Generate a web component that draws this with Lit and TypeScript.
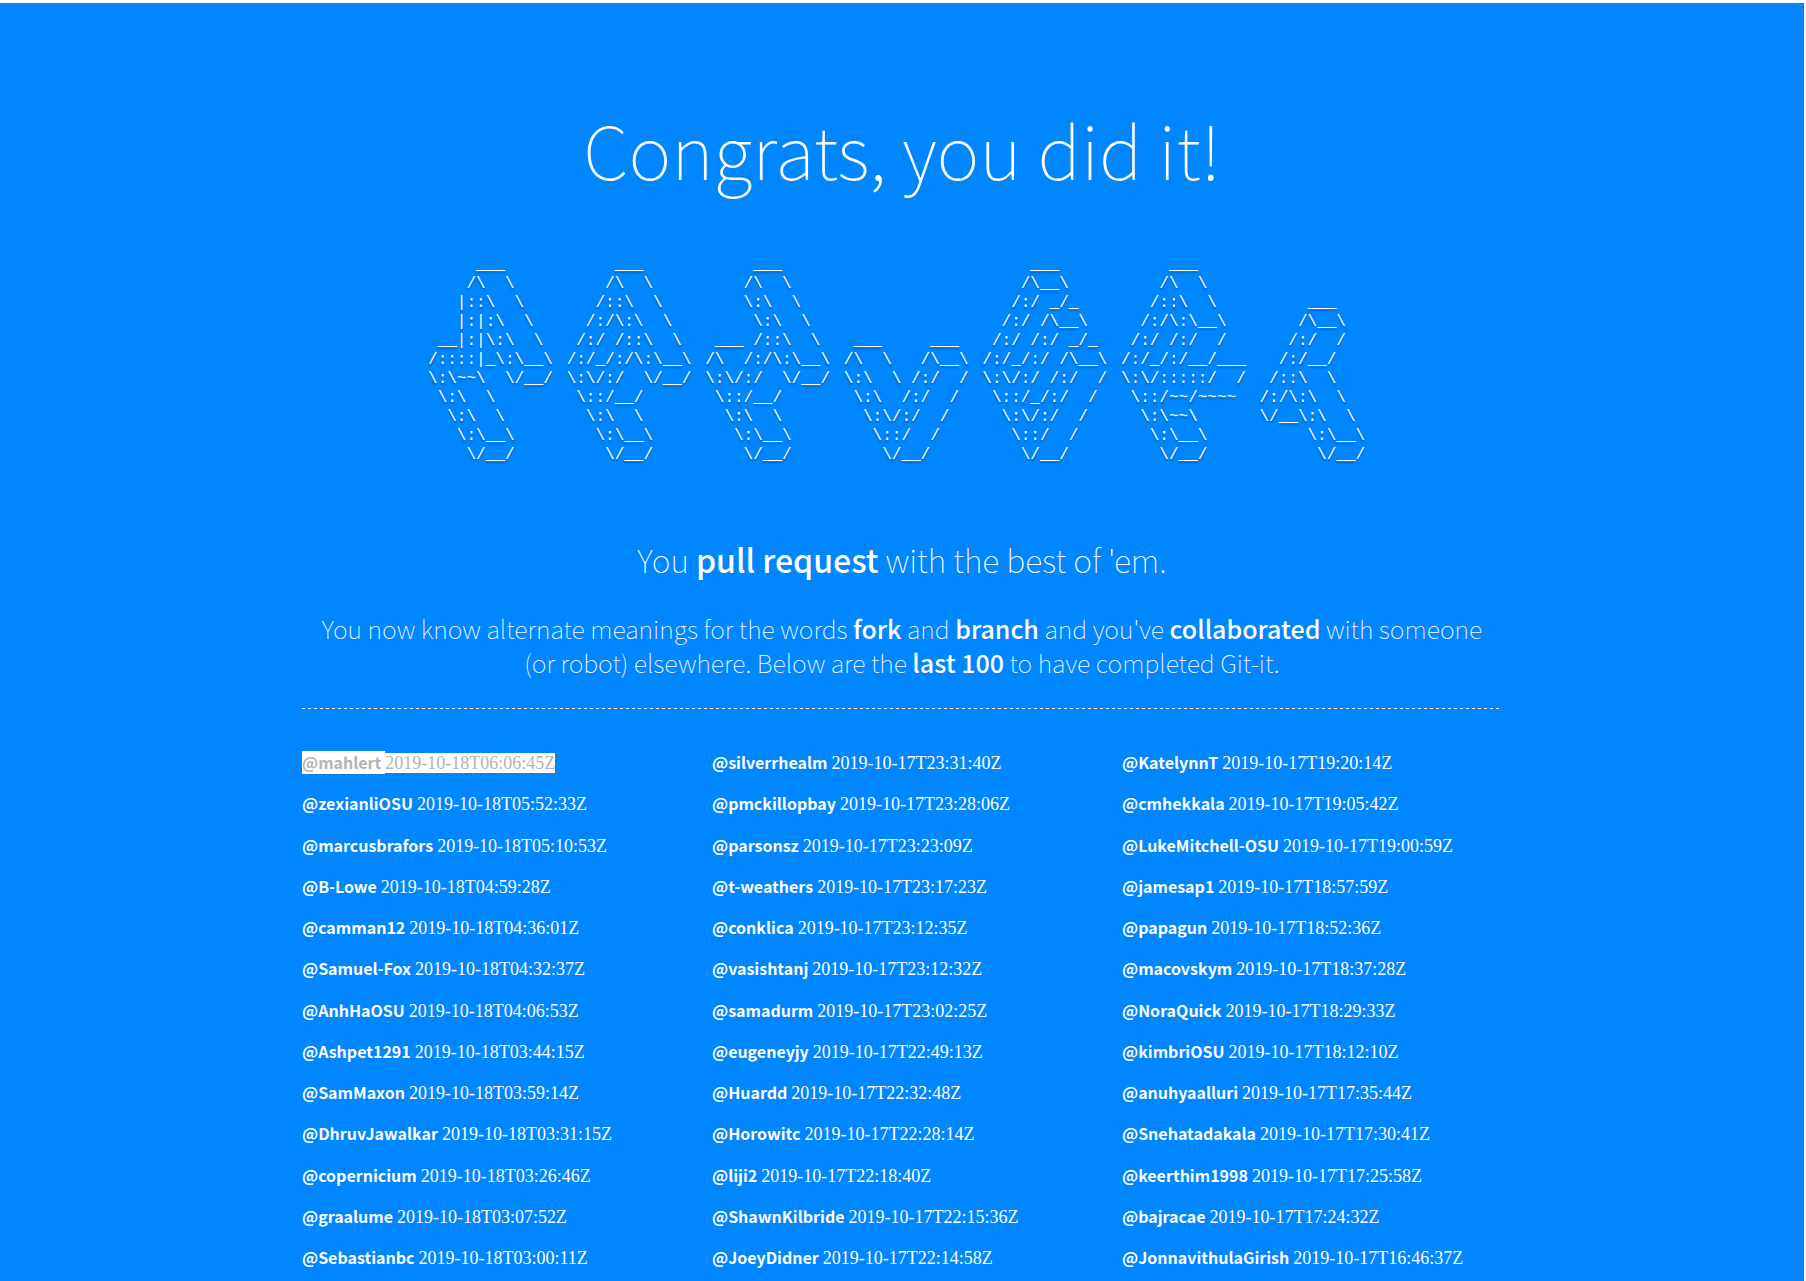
import { LitElement, html, css } from "lit";
import { customElement, property } from "lit/decorators.js";

interface Finisher {
  name: string;
  time: string;
  selected?: boolean;
}

/* One entry per banner character, eleven rows each. */
const GLYPHS: string[] = [
  String.raw`
     ___
    /\  \
   |::\  \
   |:|:\  \
 __|:|\:\  \
/::::|_\:\__\
\:\~~\  \/__/
 \:\  \
  \:\  \
   \:\__\
    \/__/     `,
  String.raw`
     ___
    /\  \
   /::\  \
  /:/\:\  \
 /:/ /::\  \
/:/_/:/\:\__\
\:\/:/  \/__/
 \::/__/
  \:\  \
   \:\__\
    \/__/     `,
  String.raw`
     ___
    /\  \
    \:\  \
     \:\  \
 ___ /::\  \
/\  /:/\:\__\
\:\/:/  \/__/
 \::/__/
  \:\  \
   \:\__\
    \/__/     `,
  String.raw`




 ___     ___
/\  \   /\__\
\:\  \ /:/  /
 \:\  /:/  /
  \:\/:/  /
   \::/  /
    \/__/     `,
  String.raw`
     ___
    /\__\
   /:/ _/_
  /:/ /\__\
 /:/ /:/ _/_
/:/_/:/ /\__\
\:\/:/ /:/  /
 \::/_/:/  /
  \:\/:/  /
   \::/  /
    \/__/     `,
  String.raw`
     ___
    /\  \
   /::\  \
  /:/\:\__\
 /:/ /:/  /
/:/_/:/__/___
\:\/:::::/  /
 \::/~~/~~~~
  \:\~~\
   \:\__\
    \/__/     `,
  String.raw`


     ___
    /\__\
   /:/  /
  /:/__/
 /::\  \
/:/\:\  \
\/__\:\  \
     \:\__\
      \/__/   `,
].map((g) => g.slice(1));

const day = (d: number, rows: [string, string][]): Finisher[] =>
  rows.map(([name, t]) => ({ name, time: `2019-10-${d}T${t}Z` }));

const FINISHERS: Finisher[] = [
  { name: "mahlert", time: "2019-10-18T06:06:45Z", selected: true },
  ...day(18, [
    ["zexianliOSU", "05:52:33"],
    ["marcusbrafors", "05:10:53"],
    ["B-Lowe", "04:59:28"],
    ["camman12", "04:36:01"],
    ["Samuel-Fox", "04:32:37"],
    ["AnhHaOSU", "04:06:53"],
    ["Ashpet1291", "03:44:15"],
    ["SamMaxon", "03:59:14"],
    ["DhruvJawalkar", "03:31:15"],
    ["copernicium", "03:26:46"],
    ["graalume", "03:07:52"],
    ["Sebastianbc", "03:00:11"],
  ]),
  ...day(17, [
    ["silverrhealm", "23:31:40"],
    ["pmckillopbay", "23:28:06"],
    ["parsonsz", "23:23:09"],
    ["t-weathers", "23:17:23"],
    ["conklica", "23:12:35"],
    ["vasishtanj", "23:12:32"],
    ["samadurm", "23:02:25"],
    ["eugeneyjy", "22:49:13"],
    ["Huardd", "22:32:48"],
    ["Horowitc", "22:28:14"],
    ["liji2", "22:18:40"],
    ["ShawnKilbride", "22:15:36"],
    ["JoeyDidner", "22:14:58"],
    ["KatelynnT", "19:20:14"],
    ["cmhekkala", "19:05:42"],
    ["LukeMitchell-OSU", "19:00:59"],
    ["jamesap1", "18:57:59"],
    ["papagun", "18:52:36"],
    ["macovskym", "18:37:28"],
    ["NoraQuick", "18:29:33"],
    ["kimbriOSU", "18:12:10"],
    ["anuhyaalluri", "17:35:44"],
    ["Snehatadakala", "17:30:41"],
    ["keerthim1998", "17:25:58"],
    ["bajracae", "17:24:32"],
    ["JonnavithulaGirish", "16:46:37"],
  ]),
];

@customElement("ascii-banner")
export class AsciiBanner extends LitElement {
  static styles = css`
    :host {
      display: block;
    }
    .banner {
      display: grid;
      grid-template-columns: repeat(7, 1fr);
      max-width: 970px;
      margin: 0 auto;
    }
    .glyph {
      margin: 0;
      justify-self: center;
      font: 16px/19px "Liberation Mono", monospace;
      text-shadow: 0 2px 2px rgba(0, 0, 0, 0.3);
    }
  `;

  render() {
    return html`<div class="banner">
      ${GLYPHS.map((g) => html`<pre class="glyph">${g}</pre>`)}
    </div>`;
  }
}

@customElement("finisher-list")
export class FinisherList extends LitElement {
  @property({ attribute: false }) people: Finisher[] = [];

  static styles = css`
    :host {
      display: block;
    }
    .list {
      display: grid;
      grid-template-columns: repeat(3, 1fr);
      grid-template-rows: repeat(13, 23px);
      grid-auto-flow: column;
      align-content: space-between;
      column-gap: 30px;
      min-height: 518px;
      margin: 0;
      padding: 0;
      list-style: none;
    }
    .row {
      font: 18px/23px "Liberation Serif", serif;
      white-space: nowrap;
    }
    .name {
      display: inline-block;
      color: inherit;
      font-family: "Noto Sans CJK SC", sans-serif;
      font-size: 16px;
      line-height: 23px;
      font-weight: 700;
      text-decoration: none;
      padding-right: 4px;
    }
    .selected .name,
    .selected .time {
      background: #fff;
      color: #b3b3b3;
    }
  `;

  render() {
    return html`<ol class="list">
      ${this.people.map(
        (p) => html`<li class="row ${p.selected ? "selected" : ""}"><a class="name" href="https://github.com/${p.name}">@${p.name}</a><time class="time" datetime=${p.time}>${p.time}</time></li>`
      )}
    </ol>`;
  }
}

@customElement("app-root")
export class AppRoot extends LitElement {
  static styles = css`
    :host {
      display: block;
      box-sizing: border-box;
      min-height: 100vh;
      padding: 3px 2px 0 0;
      background: #fff;
      color: #fff;
    }
    .page {
      min-height: calc(100vh - 3px);
      box-sizing: border-box;
      padding: 93px 20px 0;
      background: #0086ff;
      font-family: "Noto Sans CJK SC", sans-serif;
      font-weight: 100;
      text-align: center;
    }
    .content {
      max-width: 1200px;
      margin: 0 auto;
    }
    .title {
      margin: 0;
      font-size: 73px;
      line-height: 104px;
      font-weight: 100;
    }
    .art {
      padding: 56px 0 0 18px;
      text-align: left;
    }
    .lead {
      margin: 71px 0 0;
      font-size: 32px;
      line-height: 46px;
      font-weight: 100;
    }
    .text {
      margin: 29px 0 0;
      padding: 0 10px;
      font-size: 25px;
      line-height: 34px;
    }
    .strong {
      font-weight: 500;
    }
    .rule {
      height: 1px;
      margin: 29px 0 42px;
      border: 0;
      background: repeating-linear-gradient(90deg, #fff 0 3px, transparent 3px 6px);
    }
    .people {
      text-align: left;
    }
  `;

  render() {
    return html`<main class="page">
      <div class="content">
        <h1 class="title">Congrats, you did it!</h1>
        <ascii-banner class="art"></ascii-banner>
        <h2 class="lead">You <strong class="strong">pull request</strong> with the best of 'em.</h2>
        <p class="text">
          You now know alternate meanings for the words <strong class="strong">fork</strong> and
          <strong class="strong">branch</strong> and you've
          <strong class="strong">collaborated</strong> with someone (or robot) elsewhere. Below are the
          <strong class="strong">last 100</strong> to have completed Git-it.
        </p>
        <hr class="rule" />
        <finisher-list class="people" .people=${FINISHERS}></finisher-list>
      </div>
    </main>`;
  }
}
